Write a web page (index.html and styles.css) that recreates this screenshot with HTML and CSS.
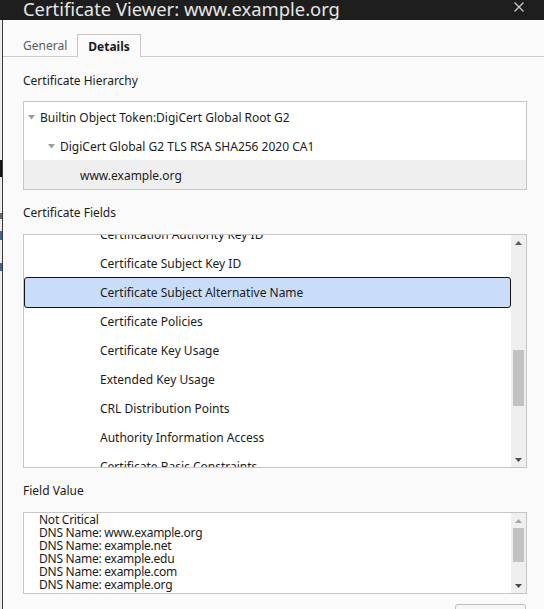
FILE: index.html
```html
<!DOCTYPE html>
<html lang="en">
<head>
<meta charset="utf-8">
<title>Certificate Viewer: www.example.org</title>
<link rel="stylesheet" href="styles.css">
</head>
<body>
<div class="app">
  <header class="titlebar">
    <span class="title">Certificate Viewer: www.example.org</span>
    <svg class="close" width="10" height="10" viewBox="0 0 10 10"><path d="M0.5 0.5 L9.5 9.5 M9.5 0.5 L0.5 9.5" stroke="#c4c4c4" stroke-width="1.4" fill="none"/></svg>
  </header>
  <div class="main">
    <div class="behind">
      <span class="mark mark-blob"></span>
      <span class="mark mark-gray"></span>
      <span class="mark mark-blue"></span>
      <span class="mark mark-blue2"></span>
    </div>
    <div class="dialog">
      <nav class="tabs">
        <span class="tab">General</span>
        <span class="tab active">Details</span>
      </nav>
      <section class="content">
        <div class="label label-hier">Certificate Hierarchy</div>
        <div class="box hier">
          <div class="node l1"><svg class="tri" width="7" height="5" viewBox="0 0 7 5"><path d="M0 0 H7 L3.5 4.5 Z" fill="#9c9c9c"/></svg><span>Builtin Object Token:DigiCert Global Root G2</span></div>
          <div class="node l2"><svg class="tri" width="7" height="5" viewBox="0 0 7 5"><path d="M0 0 H7 L3.5 4.5 Z" fill="#9c9c9c"/></svg><span>DigiCert Global G2 TLS RSA SHA256 2020 CA1</span></div>
          <div class="node l3 selected"><span>www.example.org</span></div>
        </div>

        <div class="label label-fields">Certificate Fields</div>
        <div class="box fields">
          <div class="viewport">
            <div class="list">
              <div class="field">Certification Authority Key ID</div>
              <div class="field">Certificate Subject Key ID</div>
              <div class="field selected">Certificate Subject Alternative Name</div>
              <div class="field">Certificate Policies</div>
              <div class="field">Certificate Key Usage</div>
              <div class="field">Extended Key Usage</div>
              <div class="field">CRL Distribution Points</div>
              <div class="field">Authority Information Access</div>
              <div class="field">Certificate Basic Constraints</div>
              <div class="field">Object Identifier (1 3 6 1 4 1 11129 2 4 2)</div>
            </div>
          </div>
          <div class="scrollbar">
            <div class="sb-btn"><svg width="7" height="4" viewBox="0 0 7 4"><path d="M0 4 H7 L3.5 0 Z" fill="#5a5a5a"/></svg></div>
            <div class="sb-track"><div class="thumb"></div></div>
            <div class="sb-btn"><svg width="7" height="4" viewBox="0 0 7 4"><path d="M0 0 H7 L3.5 4 Z" fill="#4a4a4a"/></svg></div>
          </div>
        </div>

        <div class="label label-value">Field Value</div>
        <div class="box value">
          <div class="value-text">Not Critical
DNS Name: www.example.org
DNS Name: example.net
DNS Name: example.edu
DNS Name: example.com
DNS Name: example.org</div>
          <div class="scrollbar">
            <div class="sb-btn"><svg width="7" height="4" viewBox="0 0 7 4"><path d="M0 4 H7 L3.5 0 Z" fill="#a8a8a8"/></svg></div>
            <div class="sb-track"><div class="thumb"></div></div>
            <div class="sb-btn"><svg width="7" height="4" viewBox="0 0 7 4"><path d="M0 0 H7 L3.5 4 Z" fill="#4a4a4a"/></svg></div>
          </div>
        </div>

        <div class="actions">
          <button class="btn">Export…</button>
        </div>
      </section>
    </div>
  </div>
</div>
</body>
</html>
```
FILE: styles.css
```css
* { box-sizing: border-box; }
html, body { margin: 0; padding: 0; }
body {
  width: 544px;
  height: 609px;
  overflow: hidden;
  background: #fafafa;
  font-family: "Noto Sans", "Open Sans", sans-serif;
  font-size: 12px;
  color: #1b1b1b;
}
.app { display: flex; flex-direction: column; height: 609px; }

.titlebar {
  flex: none;
  height: 20px;
  background: #1e1e1e;
  display: flex;
  align-items: flex-start;
  justify-content: space-between;
  padding: 0 20px 0 23px;
  overflow: hidden;
}
.title {
  font-size: 18.4px;
  line-height: 18px;
  color: #e6e6e6;
  white-space: nowrap;
}
.close { margin-top: 2px; flex: none; }

.main { flex: 1; display: flex; min-height: 0; }
.behind {
  flex: none;
  width: 3px;
  background: #ececec;
  border-right: 1px solid #3a3a3a;
  display: flex;
  flex-direction: column;
}
.mark { display: block; width: 2px; }
.mark-blob { margin-top: 140px; height: 17px; background: #151515; }
.mark-gray { margin-top: 36px; height: 6px; background: #6a6a6a; }
.mark-blue { margin-top: 12px; height: 9px; background: #4a5fa0; }
.mark-blue2 { margin-top: 23px; height: 8px; background: #4a5fa0; }

.dialog { flex: 1; display: flex; flex-direction: column; min-width: 0; }

.tabs {
  flex: none;
  height: 37px;
  padding: 14px 0 0 10px;
  border-bottom: 1px solid #cdcdcd;
  display: flex;
  align-items: flex-end;
}
.tab {
  height: 22px;
  line-height: 24px;
  padding: 0 10px;
  color: #5c5c5c;
}
.tab.active {
  height: 23px;
  margin-bottom: -1px;
  border: 1px solid #c8c8c8;
  border-bottom: none;
  background: #fafafa;
  font-weight: bold;
  color: #1b1b1b;
  line-height: 23px;
}

.content {
  flex: 1;
  display: flex;
  flex-direction: column;
  padding: 0 17px 0 20px;
}
.label { height: 16px; line-height: 16px; flex: none; }
.label-hier { margin: 16px 0 12px; }
.label-fields { margin: 15px 0 13px; }
.label-value { margin: 15px 0 13px; }

.box {
  flex: none;
  border: 1px solid #c6c6c6;
  background: #ffffff;
}

.hier { height: 89px; }
.node {
  height: 29px;
  padding-top: 1px;
  display: flex;
  align-items: center;
  white-space: nowrap;
}
.node .tri { margin-right: 5px; flex: none; }
.node.l1 { padding-left: 4px; }
.node.l2 { padding-left: 24px; }
.node.l3 { padding-left: 56px; }
.node.selected { background: #efefef; }

.fields { height: 234px; display: flex; }
.viewport { flex: 1; overflow: hidden; min-width: 0; }
.list { margin-top: -15px; }
.field {
  height: 29px;
  line-height: 30px;
  padding-left: 76px;
  white-space: nowrap;
}
.field.selected {
  height: 31px;
  margin: -1px 0;
  border: 1px solid #141414;
  border-radius: 3px;
  background: #c9ddf8;
  padding-left: 75px;
}

.scrollbar {
  flex: none;
  width: 15px;
  background: #efefef;
  display: flex;
  flex-direction: column;
}
.sb-btn {
  flex: none;
  height: 15px;
  display: flex;
  align-items: center;
  justify-content: center;
}
.sb-btn svg { display: block; }
.sb-track { flex: 1; padding: 0 2px; }
.thumb { background: #c2c2c2; }
.fields .thumb { margin-top: 100px; height: 56px; }
.value .thumb { height: 34px; }

.value { height: 82px; display: flex; }
.value-text {
  flex: 1;
  overflow: hidden;
  padding-left: 15px;
  line-height: 13px;
  letter-spacing: -0.25px;
  white-space: pre;
}

.actions {
  flex: none;
  display: flex;
  justify-content: flex-end;
  margin-top: 10px;
  padding-right: 1px;
}
.btn {
  width: 71px;
  height: 28px;
  border: 1px solid #bdbdbd;
  border-radius: 3px;
  background: #f6f6f6;
  font: inherit;
  color: #1b1b1b;
}
```
